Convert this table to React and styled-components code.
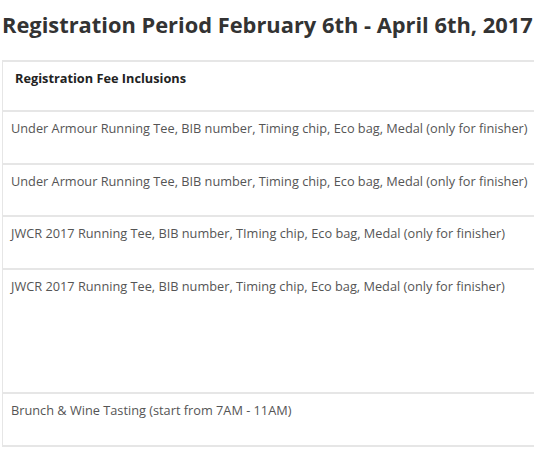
import React from 'react'
import styled, { createGlobalStyle } from 'styled-components'

const Global = createGlobalStyle`
  html, body {
    margin: 0;
    padding: 0;
    background: #fff;
    overflow: hidden;
  }
  body {
    font-family: "Open Sans", "Liberation Sans", sans-serif;
  }
`

const Page = styled.div`
  width: 760px;
  padding: 0 0 0 2px;
`

const Title = styled.h2`
  margin: 10px 0 20px;
  font-size: 21.85px;
  line-height: 30px;
  font-weight: 700;
  color: #333;
  white-space: nowrap;
`

const Table = styled.table`
  border-collapse: collapse;
  width: 740px;
  table-layout: fixed;
`

const HeadCell = styled.th`
  text-align: left;
  vertical-align: top;
  padding: 7px 12px 0;
  height: 50px;
  box-sizing: border-box;
  font-size: 12.75px;
  line-height: 19px;
  font-weight: 700;
  color: #222;
  border-top: 2px solid #e6e6e6;
  border-bottom: 2px solid #e6e6e6;
  border-left: 1px solid #e6e6e6;
`

const Cell = styled.td`
  vertical-align: top;
  padding: 7px 8px 0;
  height: ${p => p.$h}px;
  box-sizing: border-box;
  font-size: 12.75px;
  line-height: 19px;
  color: #555;
  white-space: nowrap;
  border-bottom: 2px solid #e6e6e6;
  border-left: 1px solid #e6e6e6;
`

const rows = [
  { text: 'Under Armour Running Tee, BIB number, Timing chip, Eco bag, Medal (only for finisher)', h: 53 },
  { text: 'Under Armour Running Tee, BIB number, Timing chip, Eco bag, Medal (only for finisher)', h: 52 },
  { text: 'JWCR 2017 Running Tee, BIB number, TIming chip, Eco bag, Medal (only for finisher)', h: 53 },
  { text: 'JWCR 2017 Running Tee, BIB number, Timing chip, Eco bag, Medal (only for finisher)', h: 124 },
  { text: 'Brunch & Wine Tasting (start from 7AM - 11AM)', h: 53 },
]

export default function App() {
  return (
    <Page>
      <Global />
      <Title>Registration Period February 6th - April 6th, 2017</Title>
      <Table>
        <colgroup>
          <col style={{ width: 560 }} />
          <col />
        </colgroup>
        <thead>
          <tr>
            <HeadCell>Registration Fee Inclusions</HeadCell>
            <HeadCell />
          </tr>
        </thead>
        <tbody>
          {rows.map((r, i) => (
            <tr key={i}>
              <Cell $h={r.h}>{r.text}</Cell>
              <Cell $h={r.h} />
            </tr>
          ))}
        </tbody>
      </Table>
    </Page>
  )
}
